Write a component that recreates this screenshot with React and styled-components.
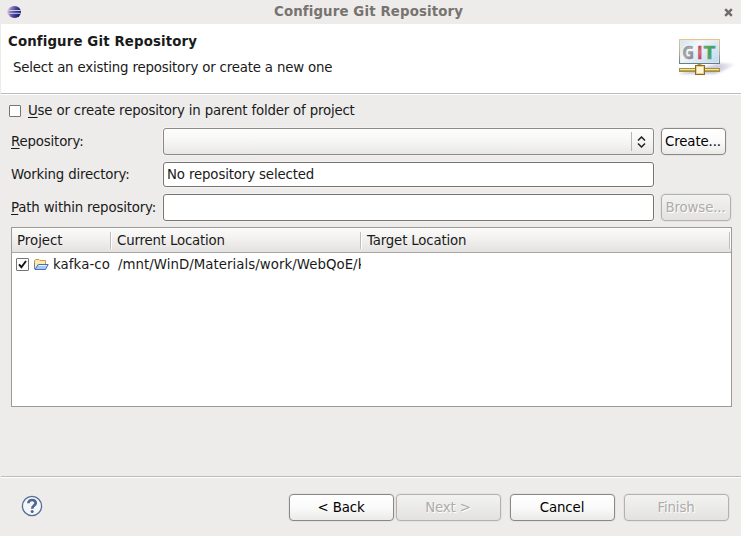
import React from "react";
import styled, { createGlobalStyle } from "styled-components";

const Global = createGlobalStyle`
  * { box-sizing: border-box; }
  body { margin: 0; background: #edeceb; }
`;

const Dialog = styled.main`
  width: 741px;
  height: 536px;
  display: flex;
  flex-direction: column;
  background: #edeceb;
  color: #1a1a1a;
  font: 13.33px/16px "DejaVu Sans", sans-serif;
  letter-spacing: -0.175px;
  white-space: nowrap;
  overflow: hidden;
`;

const TitleBar = styled.header`
  height: 24px;
  flex: none;
  display: grid;
  grid-template-columns: 24px 1fr 30px;
  align-items: center;
  padding: 0 5px 0 7px;
  color: #77736f;
  font-weight: bold;
  letter-spacing: 0.13px;
  text-align: center;
`;

const CloseIcon = styled.svg`
  display: block;
  justify-self: end;
  margin-right: 3px;
`;

const Banner = styled.section`
  height: 71px;
  flex: none;
  margin-left: 1px;
  padding: 10px 6px 0 7px;
  display: flex;
  justify-content: space-between;
  background: #fff;
  border-bottom: 1px solid #fff;
  box-shadow: inset 0 -1px #bdbbb9;
`;

const Heading = styled.h1`
  margin: 0 0 10px;
  font-size: 13.33px;
  line-height: 16px;
  letter-spacing: 0.13px;
`;

const Description = styled.p`
  margin: 0 0 0 5px;
`;

const GitArt = styled.svg`
  display: block;
  margin-top: 2px;
`;

const Text = styled.span`
  letter-spacing: ${(p) => (p.$spacing === undefined ? "inherit" : `${p.$spacing}px`)};
`;

const Mnemonic = styled.span`
  text-decoration: underline;
  text-decoration-thickness: 1px;
  text-underline-offset: 2px;
`;

const OptionRow = styled.label`
  display: flex;
  align-items: center;
  gap: 7px;
  height: 18px;
  margin: 7px 0 8px 9px;
  flex: none;
`;

const Check = styled.span`
  width: ${(p) => p.$size || 12}px;
  height: ${(p) => p.$size || 12}px;
  flex: none;
  background: #fff;
  border: 1px solid #777472;
  border-radius: 1px;
  display: grid;
  place-items: center;
  svg { display: block; }
`;

const RowCheck = styled(Check)`
  margin-bottom: 2px;
`;

const Form = styled.section`
  display: grid;
  grid-template-columns: 145px 491px 71px;
  grid-template-rows: 27px 25px 27px;
  column-gap: 7px;
  row-gap: 7px;
  margin-left: 11px;
  flex: none;
  align-items: center;
`;

const Field = styled.div`
  height: 100%;
  display: flex;
  align-items: center;
  padding-left: 3px;
  background: #fff;
  border: 1px solid #777472;
  border-radius: 3px;
  box-shadow: 0 0 0 1px #f3f2f1;
`;

const Combo = styled(Field)`
  justify-content: flex-end;
  border-color: #8c8986;
  background: linear-gradient(#fefefe, #f6f6f5 50%, #e8e7e6);
`;

const ComboArrow = styled.span`
  height: 19px;
  width: 22px;
  padding-right: 2px;
  border-left: 1px solid #b9b7b4;
  display: grid;
  place-items: center;
`;

const Button = styled.button`
  width: ${(p) => p.$width}px;
  height: 27px;
  padding: 0 1px 0 0;
  font: inherit;
  color: #000;
  letter-spacing: -0.12px;
  border: 1px solid #8a8784;
  border-radius: 4px;
  background: linear-gradient(#ffffff, #fafafa 50%, #eaeae8);
  box-shadow: 0 0 0 1px #e4e3e1;
  &:disabled {
    color: #aeaba8;
    text-shadow: 1px 1px #fff;
    border-color: #b3b0ad;
    background: linear-gradient(#f2f2f1, #e3e2e0);
  }
`;

const Table = styled.section`
  width: 721px;
  height: 180px;
  margin: 6px 0 0 11px;
  flex: none;
  border: 1px solid #9d9a97;
  background: #fff;
`;

const TableRow = styled.div`
  display: grid;
  grid-template-columns: 99px 250px 1fr;
  height: 24px;
  align-items: center;
`;

const TableHead = styled(TableRow)`
  height: 25px;
  padding-right: 1px;
  border-bottom: 1px solid #a9a6a3;
  background: linear-gradient(#fbfbfa, #f2f1f0 45%, #e3e2e0);
`;

const HeadCell = styled.div`
  height: 17px;
  line-height: 17px;
  padding-left: ${(p) => p.$pad}px;
  border-right: 1px solid #c0bebb;
  box-shadow: 1px 0 #fff;
`;

const Cell = styled.div`
  display: flex;
  align-items: center;
  padding-left: ${(p) => p.$pad}px;
  overflow: hidden;
  svg { flex: none; }
`;

const FolderArt = styled.svg`
  display: block;
  margin: 0 4px 1px 4px;
`;

const Footer = styled.footer`
  margin: auto 0 0 1px;
  height: 60px;
  flex: none;
  border-top: 1px solid #bdbbb9;
  box-shadow: inset 0 1px #fff;
  display: flex;
  align-items: flex-start;
  padding: 17px 12px 0 20px;
`;

const HelpArt = styled.svg`
  display: block;
  margin: 1px auto 0 0;
`;

const Actions = styled.div`
  display: flex;
  gap: ${(p) => p.$gap}px;
`;

const Tick = () => (
  <svg width="11" height="11" viewBox="0 0 11 11">
    <path d="M2 5.3 4.4 8.2 9 2" fill="none" stroke="#111" strokeWidth="1.9" />
  </svg>
);

const EclipseIcon = () => (
  <svg width="15" height="14" viewBox="0 0 15 14">
    <defs>
      <linearGradient id="orb" x1="0" y1="0" x2="1" y2="0.35">
        <stop offset="0" stopColor="#dfaed0" />
        <stop offset=".25" stopColor="#8a80bd" />
        <stop offset=".6" stopColor="#4a4598" />
        <stop offset="1" stopColor="#1e1c66" />
      </linearGradient>
    </defs>
    <ellipse cx="6.6" cy="7" rx="6.4" ry="6" fill="#e6b6cf" />
    <ellipse cx="7.7" cy="7" rx="6.3" ry="6" fill="url(#orb)" />
    <path d="M1.5 5.5h12.3M1.5 8.3h12.3" stroke="#c9d0f2" strokeWidth="1" />
  </svg>
);

const GitBanner = () => (
  <GitArt width="56" height="42" viewBox="0 0 56 42">
    <defs>
      <linearGradient id="sky" x1="0" y1="0" x2="1" y2="0.7">
        <stop offset="0" stopColor="#cbe2f0" />
        <stop offset=".4" stopColor="#f3f7fd" />
        <stop offset="1" stopColor="#c6dbf3" />
      </linearGradient>
      <linearGradient id="frame" x1="0" y1="0" x2="0" y2="1">
        <stop offset="0" stopColor="#e5c594" />
        <stop offset=".5" stopColor="#b5b5a4" />
        <stop offset="1" stopColor="#5f8289" />
      </linearGradient>
      <linearGradient id="shade" x1="0" y1="0" x2="1" y2="0">
        <stop offset="0" stopColor="#b9b5cc" />
        <stop offset=".7" stopColor="#c3bfd5" />
        <stop offset="1" stopColor="#f1eff6" />
      </linearGradient>
      <linearGradient id="gray" x1="0" y1="0" x2="1" y2="1">
        <stop offset="0" stopColor="#858585" />
        <stop offset=".5" stopColor="#aaa" />
        <stop offset="1" stopColor="#707070" />
      </linearGradient>
      <linearGradient id="red" x1="0" y1="0" x2="0" y2="1">
        <stop offset=".2" stopColor="#c63f49" />
        <stop offset=".5" stopColor="#d67a7e" />
        <stop offset=".85" stopColor="#c03842" />
      </linearGradient>
      <linearGradient id="green" x1="0" y1="0" x2="1" y2="1">
        <stop offset="0" stopColor="#6cb97c" />
        <stop offset=".5" stopColor="#43a058" />
        <stop offset="1" stopColor="#72b985" />
      </linearGradient>
      <filter id="soft" x="-10%" y="-20%" width="120%" height="140%">
        <feGaussianBlur stdDeviation="1" />
      </filter>
    </defs>
    <path d="M-1 38 42 27 56 28 Q48 34 36 38Z" fill="url(#shade)" opacity=".8" filter="url(#soft)" />
    <rect x=".5" y="3.5" width="40" height="24" fill="url(#sky)" stroke="url(#frame)" />
    <rect x="1.5" y="4.5" width="38" height="22" fill="none" stroke="#f4ead9" opacity=".55" />
    <g fontFamily="Open Sans, sans-serif" fontSize="17" fontWeight="bold" letterSpacing="0">
      <text x="3.2" y="22.5" textLength="12" lengthAdjust="spacingAndGlyphs" fill="url(#gray)" stroke="#8b8b8b" strokeWidth=".3">G</text>
      <text x="18" y="22.5" fill="url(#red)" stroke="#c94b54" strokeWidth=".6">I</text>
      <text x="24.6" y="22.5" textLength="12" lengthAdjust="spacingAndGlyphs" fill="url(#green)" stroke="#55a968" strokeWidth=".5">T</text>
    </g>
    <path d="M18.5 28v3h4v-3" fill="#b7a041" />
    <rect y="32" width="41" height="4" fill="#a49239" />
    <path d="M1 33.7h39" stroke="#eee6a4" strokeWidth="1.3" />
    <rect x="16.5" y="29.5" width="9" height="9" fill="#fff0c3" stroke="#8b6b23" />
    <rect x="17.5" y="30.5" width="7" height="7" fill="#fff8df" stroke="#edcc84" />
  </GitArt>
);

const FolderIcon = () => (
  <FolderArt width="16" height="13" viewBox="0 0 16 13">
    <path d="M1.5 10.5V2.5L3 1.5h3l1 1h5.5v4" fill="#ffe9ae" stroke="#c49b50" />
    <path d="M2 11.5 5.2 6.5h10l-2.7 5Z" fill="#a9c9f5" stroke="#4570b8" />
    <path d="M1.5 5v6" stroke="#6183c0" />
    <path d="M5.8 7.5h7.8" stroke="#e5f2ff" />
  </FolderArt>
);

export default function App() {
  return (
    <>
      <Global />
      <Dialog>
        <TitleBar>
          <EclipseIcon />
          <Text>Configure Git Repository</Text>
          <CloseIcon width="9" height="9" viewBox="0 0 9 9">
            <path d="m1.2 1.2 6.6 6.6m0-6.6L1.2 7.8" stroke="#6e6b68" strokeWidth="2.4" />
          </CloseIcon>
        </TitleBar>
        <Banner>
          <div>
            <Heading>Configure Git Repository</Heading>
            <Description>Select an existing repository or create a new one</Description>
          </div>
          <GitBanner />
        </Banner>
        <OptionRow>
          <Check />
          <Text><Mnemonic>U</Mnemonic>se or create repository in parent folder of project</Text>
        </OptionRow>
        <Form>
          <Text><Mnemonic>R</Mnemonic>epository:</Text>
          <Combo>
            <ComboArrow>
              <svg width="9" height="12" viewBox="0 0 9 12">
                <path d="m1 4.5 3.5-3.5L8 4.5M1 7.5 4.5 11 8 7.5" fill="none" stroke="#222" strokeWidth="1.5" />
              </svg>
            </ComboArrow>
          </Combo>
          <Button $width={65}>Create...</Button>
          <Text>Working directory:</Text>
          <Field><Text $spacing={-0.14}>No repository selected</Text></Field>
          <span />
          <Text><Mnemonic>P</Mnemonic>ath within repository:</Text>
          <Field />
          <Button $width={70} disabled>Browse...</Button>
        </Form>
        <Table>
          <TableHead>
            <HeadCell $pad={5}><Text $spacing={0}>Project</Text></HeadCell>
            <HeadCell $pad={6}>Current Location</HeadCell>
            <HeadCell $pad={6}>Target Location</HeadCell>
          </TableHead>
          <TableRow>
            <Cell $pad={4}><RowCheck $size={13}><Tick /></RowCheck><FolderIcon /><Text $spacing={0.08}>kafka-co</Text></Cell>
            <Cell $pad={7}><Text $spacing={0.04}>/mnt/WinD/Materials/work/WebQoE/k</Text></Cell>
          </TableRow>
        </Table>
        <Footer>
          <HelpArt width="22" height="22" viewBox="0 0 22 22">
            <circle cx="11" cy="11" r="9.6" fill="#f5f6f8" stroke="#536e95" strokeWidth="1.3" />
            <path d="M7.4 8.2C7.4 3.8 15 4.1 14.7 8.2 14.5 10.7 11.2 10.4 11.2 13.7" fill="none" stroke="#4c678f" strokeWidth="2.7" />
            <circle cx="11.2" cy="16.6" r="1.5" fill="#4c678f" />
          </HelpArt>
          <Actions $gap={9}>
            <Actions $gap={2}>
              <Button $width={105}>&lt; Back</Button>
              <Button $width={105} disabled>Next &gt;</Button>
            </Actions>
            <Button $width={105}>Cancel</Button>
            <Button $width={105} disabled>Finish</Button>
          </Actions>
        </Footer>
      </Dialog>
    </>
  );
}
